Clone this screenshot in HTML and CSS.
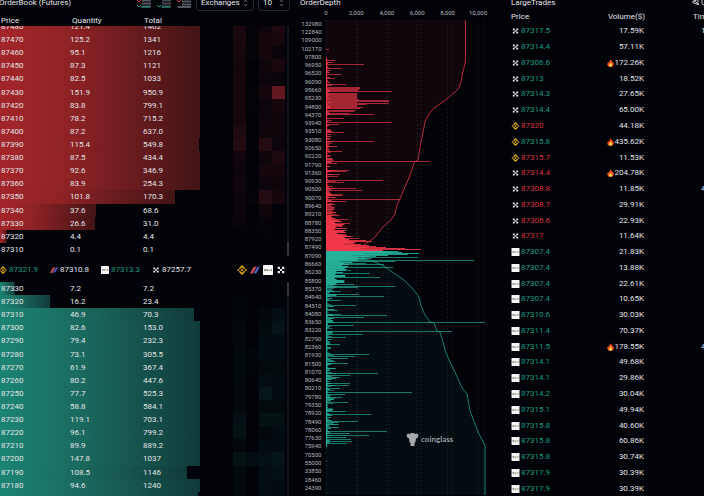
FILE: index.html
```html
<!DOCTYPE html>
<html lang="en">
<head>
<meta charset="utf-8">
<title>Order flow</title>
<link rel="stylesheet" href="styles.css">
</head>
<body>
<svg class="defs" aria-hidden="true">
  <symbol id="binance" viewBox="0 0 12 12">
    <path d="M2.800 4.500 6 1.300 9.200 4.500M2.800 7.500 6 10.700 9.200 7.500" fill="none" stroke="#dba622" stroke-width="1.900"/>
    <path d="M6 4.200 7.800 6 6 7.800 4.200 6ZM1.500 4.400 3 6 1.500 7.600 0 6ZM10.500 4.400 12 6 10.500 7.600 9 6Z" fill="#dba622"/>
  </symbol>
  <symbol id="bitmex" viewBox="0 0 12 12">
    <path d="M0 10.500 4 3Q5 1.500 8 2L5 8.500Q4 10.800 0 10.500Z" fill="#e0525c"/>
    <path d="M4.500 10 8.500 3Q9.500 1.600 12 2L8.500 8.700Q7.500 10.500 4.500 10Z" fill="#4a5cc0"/>
    <path d="M3.300 9.200 7 2.600" stroke="#10121c" stroke-width=".6"/>
  </symbol>
  <symbol id="bybit" viewBox="0 0 12 12">
    <rect width="12" height="12" rx=".6" fill="#f6f6f6"/>
    <path d="M1.500 6H4M4.700 6H6.300M9 6H10.600" stroke="#3c3e44" stroke-width="1.500"/>
    <path d="M7.300 5V7" stroke="#e8a53a" stroke-width="1.200"/>
  </symbol>
  <symbol id="okx" viewBox="0 0 12 12">
    <path d="M2 2.200h2.800v2.600H2zM7.200 2.200H10v2.600H7.200zM4.600 4.700h2.800v2.600H4.600zM2 7.200h2.800v2.600H2zM7.200 7.200H10v2.600H7.200z" fill="#e9e9ea"/>
  </symbol>
  <symbol id="fire" viewBox="0 0 12 14">
    <path d="M6 0C7 3 9 3.500 10 6Q10.500 5 10.300 4.200C12.500 7.500 12.500 14 6 14S-.5 8 2 5Q2.300 6.500 3.200 6.800C3.600 4 6.200 3 6 0Z" fill="#f4511e"/>
    <path d="M6 6C6.500 8 9 8.500 8.800 11Q8.500 13.500 6 13.500T3.200 11C3.200 9 5.800 8.500 6 6Z" fill="#ffd54a"/>
  </symbol>
</svg>
<main class="board">
  <section class="panel book">
    <header class="bar">
      <h2>OrderBook (Futures)</h2>
      <div class="modes">
        <button aria-label="Both sides"><svg viewBox="0 0 14 11"><path d="M5 2.500h9M5 5.500h9M5 8.500h9" stroke="#55585f" stroke-width="2"/><path d="M0 2 2 4 4 2" fill="none" stroke="#d4384a"/><path d="M0 7 2 9 4 7M4 9h9" fill="none" stroke="#1d9d7e"/></svg></button>
        <button aria-label="Bids only"><svg viewBox="0 0 14 11"><path d="M5 2.500h9M5 5.500h9M5 8.500h9" stroke="#45484f" stroke-width="2"/><path d="M0 7 2 9 4 7M4 9h9" fill="none" stroke="#1d9d7e"/></svg></button>
        <button aria-label="Asks only"><svg viewBox="0 0 14 11"><path d="M5 3.500h9M5 6.500h9M1 9h13" stroke="#55585f" stroke-width="2"/><path d="M0 2 2 4 4 2" fill="none" stroke="#d4384a"/></svg></button>
      </div>
      <label class="pick wide"><select aria-label="Exchanges"><option>Exchanges</option></select><svg viewBox="0 0 6 8"><path d="M1 2.500 3 .800 5 2.500M1 5.500 3 7.200 5 5.500" fill="none" stroke="#8c8f96"/></svg></label>
      <label class="pick"><select aria-label="Price step"><option>10</option></select><svg viewBox="0 0 6 8"><path d="M1 2.500 3 .800 5 2.500M1 5.500 3 7.200 5 5.500" fill="none" stroke="#8c8f96"/></svg></label>
    </header>
    <div class="heads"><span>Price</span><span>Quantity</span><span>Total</span></div>
    <div class="side asks"><table aria-label="Asks" id="asks"></table></div>
    <div class="last">
      <span class="quote up"><svg><use href="#binance"/></svg>87321.9</span>
      <span class="quote"><svg><use href="#bitmex"/></svg>87310.8</span>
      <span class="quote up"><svg><use href="#bybit"/></svg>87313.3</span>
      <span class="quote"><svg><use href="#okx"/></svg>87257.7</span>
      <span class="venues"><svg><use href="#binance"/></svg><svg><use href="#bitmex"/></svg><svg><use href="#bybit"/></svg><svg><use href="#okx"/></svg></span>
    </div>
    <div class="side bids"><table aria-label="Bids" id="bids"></table></div>
  </section>
  <section class="panel depth">
    <header class="bar"><h2>OrderDepth</h2></header>
    <svg id="depth" class="chart" viewBox="298 10 202 486" role="img" aria-label="Order depth"></svg>
  </section>
  <section class="panel trades">
    <header class="bar"><h2>LargeTrades</h2>
      <button class="sound" aria-label="Sound"><svg viewBox="0 0 12 8"><path d="M1 2h2l3-2v6L3 4H1zM1 0 7 6M10 0v4q0 2 2 2" fill="none" stroke="#c8c9cc"/></svg></button>
    </header>
    <table class="feed">
      <thead><tr><th>Price</th><th>Volume($)</th><th>Time</th></tr></thead>
      <tbody id="feed"></tbody>
    </table>
  </section>
</main>
<script src="app.js"></script>
</body>
</html>
```
FILE: styles.css
```css
* { box-sizing: border-box; }
body {
  margin: 0;
  height: 100vh;
  overflow: hidden;
  background: #020308;
  color: #e2e4e8;
  font: 8px/12px Roboto, "Liberation Sans", sans-serif;
}
.defs { position: absolute; width: 0; height: 0; }
.board {
  display: grid;
  grid-template-columns: 298fr 202fr 204fr;
  height: 100%;
}
.panel { display: flex; flex-direction: column; min-width: 0; min-height: 0; overflow: hidden; }
.bar { display: flex; flex: none; align-items: center; height: 16px; margin-top: -5px; }
h2 { margin: 0; font-size: 8px; font-weight: 400; white-space: nowrap; }
button { padding: 0; border: 0; background: none; color: inherit; }
table { border-collapse: collapse; table-layout: fixed; width: 100%; }
td, th { padding: 0; font-weight: 400; text-align: left; line-height: 12px; white-space: nowrap; }

.book h2 { flex: 1; margin-left: -1px; }
.modes { display: flex; gap: 6px; margin-right: 5px; }
.modes button, .modes svg { display: block; width: 14px; height: 11px; }
.pick { position: relative; width: 32px; height: 16px; margin-right: 8px; border: 1px solid #24262d; border-radius: 3px; }
.pick.wide { width: 58px; margin-right: 4px; }
.pick select {
  display: block; width: 100%; height: 14px; padding: 0 4px; border: 0;
  appearance: none; background: none; color: inherit; font: inherit;
}
.pick svg { position: absolute; right: 5px; top: 3px; width: 5px; height: 8px; }
.heads { display: grid; flex: none; grid-template-columns: 70px 72px 1fr; padding: 3px 13px 0 1px; height: 15px; line-height: 13px; }
.heads span:nth-child(n+2) { padding-left: 1px; }
.side {
  display: flex;
  margin-right: 9px;
  padding-right: 4px;
  overflow: hidden;
  min-height: 0;
  background: linear-gradient(#33353b, #33353b) right bottom / 2px 14px no-repeat,
    linear-gradient(#12151b, #12151b) right / 2px 100% no-repeat;
}
.asks { flex: 230 1 0; align-items: flex-end; }
.asks table { height: 236px; flex: none; }
.bids { flex: 214 1 0; align-items: flex-start; background-position: right top, right; }
.bids table { height: 223px; flex: none; }
.side tr { background-repeat: repeat-y; background-size: var(--w) 100%; }
.asks tr { background-image: linear-gradient(90deg, #a32529, #8e2225 35%, #421416); }
.bids tr { background-image: linear-gradient(90deg, #1b8473, #1a6a5f 40%, #113b39); }
.side td { padding-top: 1px; }
.side td:first-child { padding-left: 1px; }
.side col:nth-child(1) { width: 70px; }
.side col:nth-child(2) { width: 73px; }
.side col:nth-child(n+4) { width: 13px; }
.last { display: flex; flex: none; align-items: center; height: 26px; padding: 2px 12px 0 0; }
.quote { display: flex; align-items: center; width: 52px; gap: 2px; margin-left: -1px; }
.quote svg { width: 8px; height: 8px; flex: none; }
.up { color: #1c9a80; }
.down { color: #d8303f; }
.venues { display: flex; gap: 3px; margin-left: auto; }
.venues svg { width: 10px; height: 10px; }

.depth h2 { margin-left: 2px; }
.depth .bar, .trades .bar { height: 15px; }
.chart { display: block; width: 100%; flex: 1; min-height: 0; }
.chart text { font-size: 6px; fill: #b6b8bc; }
.chart .price { text-anchor: end; }
.chart .tick { text-anchor: middle; }
.chart .brand { font: 700 8px Lato, sans-serif; fill: #9b9da0; }

.trades { padding-left: 11px; }
.trades .bar { justify-content: space-between; }
.sound, .sound svg { display: block; width: 12px; height: 8px; }
.feed { flex: 1; height: 100%; }
.feed th { height: 13px; }
.feed td { padding-top: 1px; }
.feed th:nth-child(2), .feed td:nth-child(2) { text-align: right; }
.feed th:nth-child(2) { width: 40px; }
.feed td:nth-child(2) { padding-right: 1px; }
.feed th:nth-child(3) { width: 59px; padding-left: 48px; }
.feed td:nth-child(3) { padding-left: 56px; }
.trade { display: flex; align-items: center; gap: 1px; height: 12px; }
.trade svg { width: 9px; height: 8px; }
.size { display: inline-flex; align-items: center; height: 12px; vertical-align: top; }
.size svg { width: 7px; height: 8px; }
```
FILE: app.js
```js
const asks = [
  [87480, "121.4", "1462", 200, [.18, .03, .08, .2]],
  [87470, "125.2", "1341", 200, [.18, .02, .15, .15]],
  [87460, "95.1", "1216", 200, [.15, .04, .15, .05]],
  [87450, "87.3", "1121", 200, [.13, 0, .1, .18]],
  [87440, "82.5", "1033", 200, [.15, 0, .08, .06]],
  [87430, "151.9", "950.9", 200, [.15, .02, .15, .7]],
  [87420, "83.8", "799.1", 200, [.15, .02, .08, .15]],
  [87410, "78.2", "715.2", 200, [.15, 0, .08, .1]],
  [87400, "87.2", "637.0", 200, [.2, 0, .1, .1]],
  [87390, "115.4", "549.8", 199, [.25, 0, .25, .08]],
  [87380, "87.5", "434.4", 200, [.12, 0, .1, .2]],
  [87370, "92.6", "346.9", 200, [.08, 0, .15, .15]],
  [87360, "83.9", "254.3", 200, [.12, 0, .08, .1]],
  [87350, "101.8", "170.3", 175, [.08, .04, .25, .15]],
  [87340, "37.6", "68.6", 96, [.08, 0, .12, 0]],
  [87330, "26.6", "31.0", 95, [.06, 0, .04, 0]],
  [87320, "4.4", "4.4", 7, [0, 0, .03, 0]],
  [87310, "0.1", "0.1", 0, [0, 0, 0, 0]]
];
const bids = [
  [87330, "7.2", "7.2", 15, [0, 0, 0, .02]],
  [87320, "16.2", "23.4", 50, [.02, 0, 0, .02]],
  [87310, "46.9", "70.3", 194, [.02, 0, .06, .12]],
  [87300, "82.6", "153.0", 200, [.06, 0, .08, .18]],
  [87290, "79.4", "232.3", 200, [.06, 0, .1, .1]],
  [87280, "73.1", "305.5", 200, [.08, .03, .1, .1]],
  [87270, "61.9", "367.4", 200, [.08, .03, .08, .08]],
  [87260, "80.2", "447.6", 200, [.08, 0, .12, .1]],
  [87250, "77.7", "525.3", 200, [.07, 0, .2, .1]],
  [87240, "58.8", "584.1", 200, [.07, 0, .08, .08]],
  [87230, "119.1", "703.1", 200, [.14, 0, .16, .16]],
  [87220, "96.1", "799.2", 200, [.16, 0, .06, .1]],
  [87210, "89.9", "889.2", 200, [.06, 0, .1, .1]],
  [87200, "147.8", "1037", 200, [.16, .12, .14, .18]],
  [87190, "108.5", "1146", 187, [.08, 0, .12, .14]],
  [87180, "94.6", "1240", 200, [.08, 0, .12, .1]],
  [87170, "78.3", "1318", 198, [.08, 0, .1, .1]]
];
const bookRows = (rows, rgb) => "<colgroup>" + "<col>".repeat(7) + "</colgroup><tbody>" + rows.map(([p, q, t, w, heat]) =>
  `<tr style="--w:${(w / 285 * 100).toFixed(2)}%"><td>${p}</td><td>${q}</td><td>${t}</td>` +
  heat.map(a => `<td style="background:rgba(${rgb},${a})"></td>`).join("") + "</tr>").join("") + "</tbody>";
document.getElementById("asks").innerHTML = bookRows(asks, "140,36,46");
document.getElementById("bids").innerHTML = bookRows(bids, "24,100,90");

const feed = `okx up 87317.5 17.59K 1s
okx up 87314.4 57.11K
okx up 87306.6 172.26K
okx up 87313 18.52K
okx up 87314.3 27.65K
okx up 87314.4 65.00K
binance down 87320 44.18K
binance up 87315.8 435.62K
binance down 87315.7 11.53K
okx down 87314.4 204.78K
okx down 87308.8 11.85K 4s
okx down 87308.7 29.91K
okx down 87306.6 22.93K
okx down 87317 11.64K
bybit up 87307.4 21.83K
bybit up 87307.4 13.88K
bybit up 87307.4 22.61K
bybit up 87307.4 10.65K
bybit up 87310.6 30.03K
bybit up 87311.4 70.37K
bybit up 87311.5 178.55K 4s
bybit up 87314.1 49.68K
bybit up 87314.1 29.86K
bybit up 87314.2 30.04K
bybit up 87315.1 49.94K
bybit up 87315.8 40.60K
bybit up 87315.8 60.86K
bybit up 87315.8 30.74K
bybit up 87317.9 30.39K
bybit up 87317.9 30.39K`.split("\n").map(l => l.split(" "));
document.getElementById("feed").innerHTML = feed.map(([venue, dir, price, vol, time = ""]) =>
  `<tr><td><span class="trade ${dir}"><svg><use href="#${venue}"/></svg>${price}</span></td>` +
  `<td><span class="size">${parseFloat(vol) > 100 ? '<svg><use href="#fire"/></svg>' : ""}${vol}</span></td><td>${time}</td></tr>`).join("");

const prices = [132980, 122840, 109000, 102170, 97800];
for (let p = 96950; p >= 87490; p -= 430) prices.push(p);
for (let p = 87090; p >= 77630; p -= 430) prices.push(p);
prices.push(75940, 70500, 55000, 33850, 28460, 24390);

const X0 = 326;
const redBars = [[49,3],[60,9],[62,7],[64,38],[68,16],[70,4],[74,15],[78,9],[81,3],[84,20],[85,6],[87,34],[88,34],[89,33],[90,32],[91,66],
  [93,31],[94,31],[95,31],[96,31],[97,31],[98,31],[99,33],[100,63],[101,63],[102,31],[103,63],[104,40],[105,31],[106,31],[107,37],[108,34],
  [110,30],[111,28],[113,24],[114,48],[118,18],[120,6],[122,66],[124,13],[132,18],[141,48],[146,11],[151,16],[155,5],[161,104],[163,11],
  [170,23],[171,20],[174,14],[176,12],[180,57],[182,18],[188,30],[190,36],[194,16],[195,17],[199,74],[201,20],[209,8],[215,14],[219,22],
  [221,12],[223,24],[226,17],[228,21],[231,18],[234,20],[236,27],[238,33],[240,40],[241,46],[242,30],[243,28],[244,35],[245,43],[246,50],
  [247,60],[248,79],[249,95],[250,52]];
const greenBars = [[251,72],[252,76],[253,93],[254,82],[255,62],[256,50],[257,92],[258,46],[259,40],[260,148],[261,69],[263,40],[264,58],[267,67],
  [270,25],[273,44],[277,54],[281,18],[284,28],[286,69],[287,32],[291,15],[294,33],[296,58],[300,15],[305,30],[310,12],[314,15],[315,61],
  [317,38],[322,159],[325,28],[331,126],[334,37],[337,20],[344,14],[354,43],[356,29],[358,22],[363,22],[368,10],[373,52],[375,24],[377,14],
  [383,24],[385,23],[388,14],[392,86],[394,19],[397,16],[402,22],[411,20],[414,45],[421,32],[424,13],[431,61],[433,24],[435,43],[437,20],
  [439,25],[441,26],[443,21],[446,2],[461,1]];
// Thickness of the resting book behind the large levels, by row.
const envelope = [[58,3],[130,5],[180,8],[210,8],[225,17],[240,24],[246,42],[251,70],[256,46],[262,24],[270,18],[285,16],[292,9],[330,7],[360,9],[410,8],[430,11],[446,2]];
const at = y => {
  const i = envelope.findIndex(e => e[0] >= y);
  if (i < 1) return envelope[0][1];
  const [a, b] = [envelope[i - 1], envelope[i]];
  return a[1] + (b[1] - a[1]) * (y - a[0]) / (b[0] - a[0]);
};
let seed = 7;
const rand = () => (seed = seed * 16807 % 2147483647) / 2147483647;
const rect = (y, w, fill, o) => `<rect x="${X0}" y="${y}" width="${w}" height="1" fill="${fill}" opacity="${o}"/>`;
const red = "#f5384a", green = "#26b39c";
const redLine = "465.5,20 465.5,61 463,72 461,82 459,88 455,92 447,99 440,104 434,108 429,114 425,122 423.5,130 421,142 418,160 414.5,162 409,178 404,189 400,199 397,205 395,214 391,220 383,227 376,236 370,241 362,246";
const greenLine = "362,258 366,259 375,262 384,266 395,274 404,280 413,289 419,297 421,306 425,315 430,322 434,323 437,331 440,332 443,342 446,353 451,364 454,370 462,388 467,394 470,411 475,424 479,434 484,443 485,446 485,495";

let out = `<polygon points="326,20 ${redLine} 326,251" fill="#10060b"/><polygon points="326,252 ${greenLine} 326,495" fill="#020c11"/>`;
for (let k = 0; k < 6; k++) {
  for (const x of new Set([X0 + k * 30.4, X0 + k * 31.6])) {
    out += `<path d="M${x} 20V495" stroke="#fff" stroke-opacity=".08" stroke-width="1" stroke-dasharray="2 2"/>`;
  }
  out += `<text class="tick" x="${X0 + k * 30.4}" y="15">${(k * 2000).toLocaleString("en-US")}</text>`;
}
prices.forEach((p, i) => { out += `<text class="price" x="321.5" y="${(25.6 + i * 8.29).toFixed(1)}">${p}</text>`; });
out += `<polyline points="${redLine}" fill="none" stroke="#b52c3a" stroke-width="1"/><polyline points="${greenLine}" fill="none" stroke="#1b7c6c" stroke-width="1"/>`;
for (let y = 58; y < 446; y++) {
  const r = rand();
  out += rect(y, (at(y) * (y > 205 && y < 290 ? .45 + .7 * r : .15 + 1.1 * r * r)).toFixed(1), y < 251 ? red : green, y > 215 && y < 285 ? .95 : .5 + .4 * rand());
}
const strong = y => (y > 238 && y < 257) ? .85 : .65;
for (const [y, w] of redBars) out += rect(y, w, red, strong(y));
for (const [y, w] of greenBars) out += rect(y, w, green, strong(y));
out += `<path d="M326.500 58V251" stroke="${red}"/><path d="M326.500 251V446" stroke="${green}"/>`;
out += `<path d="M408 433.500 410 434 411 433H414L415 434 417 433.500 418.500 435 417.500 438 416 438.500 415.500 442 414.500 443V446H410.500V443L409.500 442 409 438.500 407.500 438 406.500 435Z" fill="#a6a8aa"/><text class="brand" x="421" y="442">coinglass</text>`;
document.getElementById("depth").innerHTML = out;
```
